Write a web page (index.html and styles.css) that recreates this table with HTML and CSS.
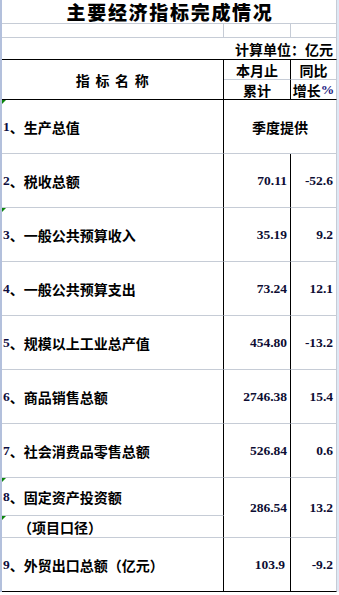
FILE: index.html
```html
<!DOCTYPE html>
<html lang="zh-CN">
<head>
    <meta charset="UTF-8">
    <meta name="viewport" content="width=device-width, initial-scale=1.0">
    <title>主要经济指标完成情况</title>
    <link rel="stylesheet" href="styles.css">
</head>
<body>
    <div class="sheet">
        <!-- 标题 -->
        <div class="cell title span3">主要经济指标完成情况</div>
        <div class="cell"></div>
        <div class="cell"></div>
        <div class="cell"></div>
        <div class="cell unit span3 bk-b">计算单位：亿元</div>

        <!-- 表头 -->
        <div class="cell head name bk-r bk-b">指 标 名 称</div>
        <div class="cell head bk-r">本月止</div>
        <div class="cell head">同比</div>
        <div class="cell head bk-r bk-b">累计</div>
        <div class="cell head bk-b">增长<span class="lat">%</span></div>

        <!-- 数据 -->
        <div class="cell label bk-r flag"><span class="lat">1</span>、生产总值</div>
        <div class="cell quarter span2">季度提供</div>

        <div class="cell label bk-r"><span class="lat">2</span>、税收总额</div>
        <div class="cell num bk-r">70.11</div>
        <div class="cell num">-52.6</div>

        <div class="cell label bk-r flag"><span class="lat">3</span>、一般公共预算收入</div>
        <div class="cell num bk-r">35.19</div>
        <div class="cell num">9.2</div>

        <div class="cell label bk-r"><span class="lat">4</span>、一般公共预算支出</div>
        <div class="cell num bk-r">73.24</div>
        <div class="cell num">12.1</div>

        <div class="cell label bk-r"><span class="lat">5</span>、规模以上工业总产值</div>
        <div class="cell num bk-r">454.80</div>
        <div class="cell num">-13.2</div>

        <div class="cell label bk-r"><span class="lat">6</span>、商品销售总额</div>
        <div class="cell num bk-r">2746.38</div>
        <div class="cell num">15.4</div>

        <div class="cell label bk-r"><span class="lat">7</span>、社会消费品零售总额</div>
        <div class="cell num bk-r">526.84</div>
        <div class="cell num">0.6</div>

        <div class="cell label bk-r flag"><span class="lat">8</span>、固定资产投资额</div>
        <div class="cell num bk-r rows2">286.54</div>
        <div class="cell num rows2">13.2</div>
        <div class="cell label sub bk-r flag">（项目口径）</div>

        <div class="cell label bk-r bk-b"><span class="lat">9</span>、外贸出口总额（亿元）</div>
        <div class="cell num bk-r bk-b short">103.9</div>
        <div class="cell num bk-b">-9.2</div>
    </div>
</body>
</html>
```

FILE: styles.css
```css
* {
    margin: 0;
    padding: 0;
    box-sizing: border-box;
}

body {
    background-color: #fff;
    width: 339px;
    height: 595px;
    font-family: 'Noto Sans CJK SC', sans-serif;
    font-size: 14px;
    font-weight: bold;
    color: #000;
}

.sheet {
    display: grid;
    grid-template-columns: 222px 67px 46px;
    grid-template-rows: 24px 14px 22px 20px 20px repeat(7, 54px) 38px 22px 54px;
    width: 339px;
    border-left: 2px solid #b3c0dc;
    border-right: 2px solid #dfe8f5;
}

.cell {
    position: relative;
    display: flex;
    align-items: center;
    border-right: 1px solid #c6ccd6;
    border-bottom: 1px solid #c6ccd6;
    white-space: pre;
    line-height: 1;
}

.bk-r {
    border-right-color: #000;
}

.bk-b {
    border-bottom-color: #000;
}

.span3 {
    grid-column: span 3;
}

.span2 {
    grid-column: span 2;
}

.rows2 {
    grid-row: span 2;
}

.title {
    justify-content: center;
    font-family: 'Liberation Sans', 'Noto Sans CJK SC', sans-serif;
    font-size: 19px;
    font-weight: 900;
    letter-spacing: 1.7px;
    padding: 3px 0 0 2px;
}

.unit {
    justify-content: flex-end;
    padding-right: 3px;
}

.head {
    justify-content: center;
}

.head.name {
    grid-row: span 2;
    word-spacing: 1.5px;
    letter-spacing: 0.5px;
}

.label {
    padding-left: 1px;
}

.label.sub {
    padding-left: 16px;
}

.quarter {
    justify-content: center;
}

.num {
    justify-content: flex-end;
    padding-right: 3px;
    font-family: 'Liberation Serif', serif;
    font-size: 13.5px;
    color: #0d0d33;
}

.num.short {
    padding-right: 5px;
}

.lat {
    font-family: 'Liberation Serif', serif;
    font-size: 13.5px;
    color: #0d0d40;
}

.head .lat {
    color: #1c1c80;
}

/* 单元格左上角的绿色小三角 */
.flag::before {
    content: '';
    position: absolute;
    left: 0;
    top: 0;
    border-top: 4px solid #0b840b;
    border-right: 4px solid transparent;
}
```
